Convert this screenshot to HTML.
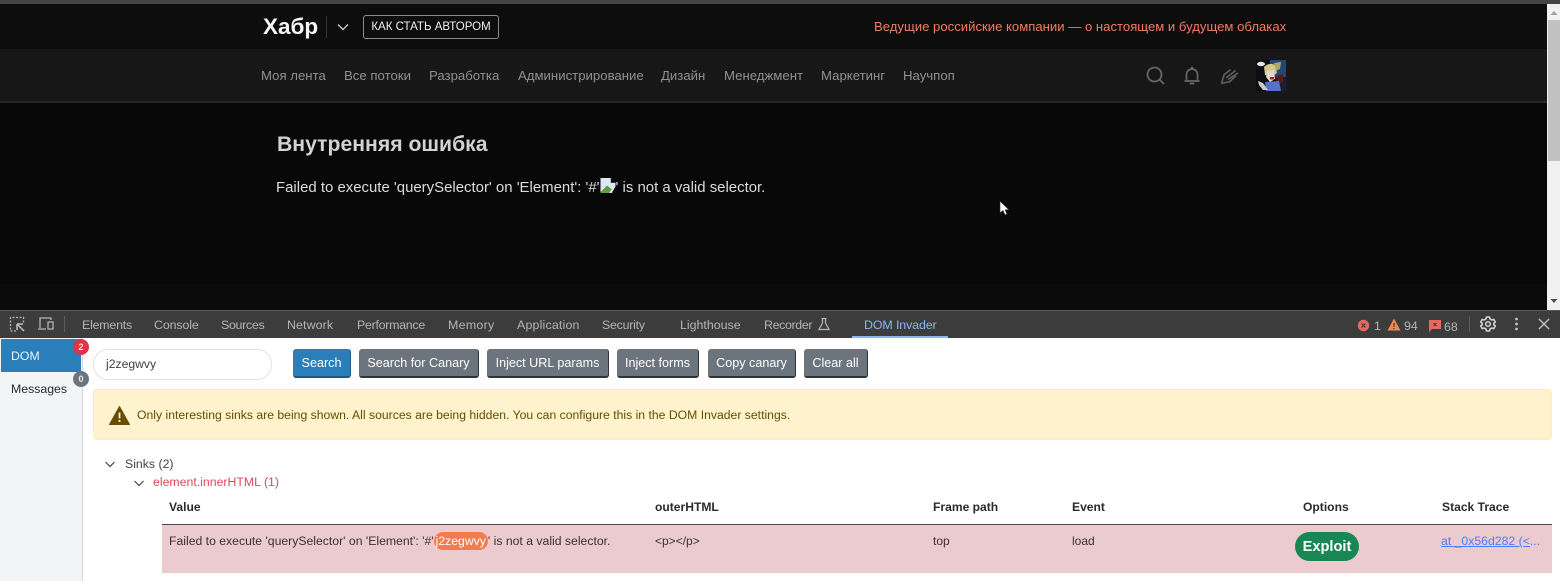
<!DOCTYPE html>
<html lang="ru"><head><meta charset="utf-8"><title>Хабр</title>
<style>
*{box-sizing:border-box}
html,body{margin:0;padding:0;width:1560px;height:581px;overflow:hidden;background:#fff;font-family:"Liberation Sans",sans-serif}
#w{position:absolute;left:0;top:0;width:1560px;height:581px;overflow:hidden;filter:blur(.3px)}
.a{position:absolute;white-space:nowrap}
.n{top:68px;font-size:13.2px;color:#8e9195;line-height:16px}
.t{top:318px;font-size:12.4px;color:#b4b4b4;line-height:14px}
.b{top:349px;height:29px;background:#6c757d;color:#fff;font-size:12.6px;line-height:28px;text-align:center;border-radius:3px;border-right:1px solid #2f3438;border-bottom:2px solid #2f3438}
.h{top:500px;font-size:12.1px;font-weight:bold;color:#2b2b2b;line-height:14px}
.c{top:534px;font-size:12px;color:#3a3034;line-height:14px}
</style></head><body><div id="w">
<div class="a" style="left:0;top:0;width:1560px;height:4px;background:#444"></div>
<div class="a" style="left:0;top:4px;width:1547px;height:45px;background:#0d0d0d"></div>
<div class="a" style="left:0;top:49px;width:1547px;height:52px;background:#171717"></div>
<div class="a" style="left:0;top:101px;width:1547px;height:2px;background:#262626"></div>
<div class="a" style="left:0;top:103px;width:1547px;height:181px;background:#080808"></div>
<div class="a" style="left:0;top:284px;width:1547px;height:26px;background:#0b0b0b"></div>

<div class="a" style="left:263px;top:14px;font-size:22.500px;font-weight:bold;color:#f5f5f5;line-height:25px">Хабр</div>
<div class="a" style="left:326px;top:16px;width:1px;height:22px;background:#333"></div>
<svg class="a" style="left:336px;top:22px" width="14" height="10" viewBox="0 0 14 10"><path d="M2 2.500 7 7.500 12 2.500" fill="none" stroke="#c9c9c9" stroke-width="1.400"/></svg>
<div class="a" style="left:363px;top:15px;width:136px;height:24px;border:1px solid #8a8a8a;border-radius:3px;color:#f0f0f0;font-size:11.500px;line-height:22px;text-align:center">КАК СТАТЬ АВТОРОМ</div>
<div class="a" style="left:874px;top:19px;font-size:13.130px;color:#f47a64;line-height:16px">Ведущие российские компании — о настоящем и будущем облаках</div>

<div class="a n" style="left:261px">Моя лента</div>
<div class="a n" style="left:344px">Все потоки</div>
<div class="a n" style="left:429px">Разработка</div>
<div class="a n" style="left:518px">Администрирование</div>
<div class="a n" style="left:661px">Дизайн</div>
<div class="a n" style="left:724px">Менеджмент</div>
<div class="a n" style="left:821px">Маркетинг</div>
<div class="a n" style="left:903px">Научпоп</div>

<svg class="a" style="left:1145px;top:65px" width="22" height="22" viewBox="0 0 22 22"><circle cx="9.500" cy="9.500" r="7" fill="none" stroke="#666" stroke-width="1.800"/><path d="M14.700 14.700 19 19" stroke="#666" stroke-width="1.800"/></svg>
<svg class="a" style="left:1183px;top:65px" width="18" height="21" viewBox="0 0 18 21"><path d="M1.500 16H16.500M3.500 16V9.500A5.500 5.500 0 0 1 14.500 9.500V16" fill="none" stroke="#666" stroke-width="1.700"/><circle cx="9" cy="3" r="1.300" fill="#666"/><path d="M6.800 18.500H11.200" stroke="#666" stroke-width="2"/></svg>
<svg class="a" style="left:1220px;top:66px" width="20" height="19" viewBox="0 0 20 19"><path d="M1.500 17.500 4 9 10.500 3.500M1.500 17.500 10 15.500 16 9.500M6 12 15.500 4.500M8 13.500 18 7" fill="none" stroke="#5f5f5f" stroke-width="1.600"/></svg>

<svg class="a" style="left:1256px;top:60px" width="30" height="31" viewBox="0 0 30 31">
<rect width="30" height="31" rx="2" fill="#0d0d14"/>
<rect x="14" y="0" width="16" height="17" fill="#23457c"/>
<rect x="20" y="17" width="10" height="14" fill="#1a1d38"/>
<path d="M19 17 27 14 27 22 21 24Z" fill="#5c171a"/>
<path d="M9 22 23 21 25 31 10 31Z" fill="#5672c6"/>
<path d="M8 7Q13 2 19 5L21 13 18 15 16 10 13 15 9 15Z" fill="#d4c88a"/>
<path d="M18 3 25 2 24 9 20 11Z" fill="#b3a568"/>
<path d="M11 11 18 10 19 19 14 22 10 17Z" fill="#e2d6d2"/>
<path d="M14 17h4v2.500h-4z" fill="#a62428"/>
<ellipse cx="5" cy="4" rx="4" ry="2.200" fill="#e6e6e6"/>
<path d="M2 21 7 23 12 30 7 30 3 25Z" fill="#cfc9c4"/>
</svg>

<div class="a" style="left:277px;top:132px;font-size:21.200px;font-weight:bold;color:#d2d2d2;line-height:26px">Внутренняя ошибка</div>
<div class="a" style="left:276px;top:179px;font-size:14.950px;color:#dcdcdc;line-height:18px">Failed to execute 'querySelector' on 'Element': '#'<span style="display:inline-block;width:16px"></span>' is not a valid selector.</div>
<svg class="a" style="left:600px;top:178px" width="16" height="15" viewBox="0 0 16 16"><path d="M0 0H11L16 5V16H0Z" fill="#dfe6f3"/><path d="M0 15 7 8 12 12 9 16H0Z" fill="#5d9e3f"/><path d="M11 0V5H16Z" fill="#050505"/><path d="M12 16 16 9V16Z" fill="#111"/></svg>
<svg class="a" style="left:999px;top:200px" width="11" height="16" viewBox="0 0 11 16"><path d="M1 1V13L4 10.500 6 15 8 14.200 6.200 9.800H10Z" fill="#fff" stroke="#222" stroke-width=".6"/></svg>

<div class="a" style="left:1547px;top:4px;width:13px;height:306px;background:#f1f1f1"></div>
<div class="a" style="left:1548px;top:20px;width:12px;height:141px;background:#c1c1c1"></div>
<svg class="a" style="left:1548px;top:9px" width="12" height="8" viewBox="0 0 12 8"><path d="M2.500 6 6 2 9.500 6Z" fill="#a3a3a3"/></svg>
<svg class="a" style="left:1548px;top:297px" width="12" height="8" viewBox="0 0 12 8"><path d="M2.500 2 6 6 9.500 2Z" fill="#505050"/></svg>

<div class="a" style="left:0;top:310px;width:1560px;height:28px;background:#3c3c3c;border-top:1px solid #5a5a5a"></div>
<svg class="a" style="left:8px;top:315px" width="18" height="18" viewBox="0 0 18 18"><path d="M8 16H2.500V2.500H15.500V8" fill="none" stroke="#b5b5b5" stroke-width="1.300" stroke-dasharray="2 1.500"/><path d="M9 9H15M9 9V15M9 9 16 16" fill="none" stroke="#c0c0c0" stroke-width="1.500"/></svg>
<svg class="a" style="left:37px;top:316px" width="18" height="15" viewBox="0 0 18 15"><path d="M1 13H9M3 12V2H14V4M11 6H16V13H11Z" fill="none" stroke="#b5b5b5" stroke-width="1.300"/></svg>
<div class="a" style="left:64px;top:316px;width:1px;height:16px;background:#5c5c5c"></div>
<div class="a t" style="left:82px;letter-spacing:-.2px">Elements</div>
<div class="a t" style="left:154px;letter-spacing:-.12px">Console</div>
<div class="a t" style="left:221px;letter-spacing:-.3px">Sources</div>
<div class="a t" style="left:287px;letter-spacing:.1px">Network</div>
<div class="a t" style="left:357px;letter-spacing:-.27px">Performance</div>
<div class="a t" style="left:448px;letter-spacing:.3px">Memory</div>
<div class="a t" style="left:517px;letter-spacing:.18px">Application</div>
<div class="a t" style="left:602px;letter-spacing:-.25px">Security</div>
<div class="a t" style="left:680px">Lighthouse</div>
<div class="a t" style="left:764px;letter-spacing:-.35px">Recorder</div>
<svg class="a" style="left:817px;top:317px" width="14" height="14" viewBox="0 0 14 14"><path d="M4.500 1.500H9.500M5.500 1.500V6L2 12.500H12L8.500 6V1.500" fill="none" stroke="#b5b5b5" stroke-width="1.200"/></svg>
<div class="a t" style="left:864px;color:#8ab4f8;letter-spacing:-.1px">DOM Invader</div>
<div class="a" style="left:852px;top:336px;width:96px;height:2px;background:#8ab4f8"></div>

<svg class="a" style="left:1357px;top:319px" width="13" height="13" viewBox="0 0 13 13"><circle cx="6.500" cy="6.500" r="5.700" fill="#e46962"/><path d="M4.500 4.500 8.500 8.500M8.500 4.500 4.500 8.500" stroke="#3c3c3c" stroke-width="1.200"/></svg>
<div class="a t" style="left:1374px;top:319px">1</div>
<svg class="a" style="left:1387px;top:318px" width="14" height="13" viewBox="0 0 14 13"><path d="M7 .5 13.500 12.500H.5Z" fill="#ee8a4e"/><path d="M7 5V9M7 10V11.300" stroke="#3c3c3c" stroke-width="1.200"/></svg>
<div class="a t" style="left:1404px;top:319px">94</div>
<svg class="a" style="left:1429px;top:320px" width="12" height="12" viewBox="0 0 12 12"><path d="M0 0H12V9H3L0 12Z" fill="#e46962"/><path d="M4.500 3 7.500 6M7.500 3 4.500 6" stroke="#3c3c3c" stroke-width="1"/></svg>
<div class="a t" style="left:1444px;top:320px">68</div>
<div class="a" style="left:1469px;top:316px;width:1px;height:16px;background:#5c5c5c"></div>
<svg class="a" style="left:1480px;top:316px" width="16" height="16" viewBox="0 0 16 16"><path d="M6.500 1H9.500L10 3 11.800 4 13.800 3.400 15.300 6 13.800 7.300V8.700L15.300 10 13.800 12.600 11.800 12 10 13 9.500 15H6.500L6 13 4.200 12 2.200 12.600.7 10 2.200 8.700V7.300L.7 6 2.200 3.400 4.200 4 6 3Z" fill="none" stroke="#cfcfcf" stroke-width="1.600"/><circle cx="8" cy="8" r="2.300" fill="none" stroke="#cfcfcf" stroke-width="1.500"/></svg>
<svg class="a" style="left:1514px;top:317px" width="5" height="14" viewBox="0 0 5 14"><circle cx="2.500" cy="2" r="1.400" fill="#c4c4c4"/><circle cx="2.500" cy="7" r="1.400" fill="#c4c4c4"/><circle cx="2.500" cy="12" r="1.400" fill="#c4c4c4"/></svg>
<svg class="a" style="left:1538px;top:318px" width="12" height="12" viewBox="0 0 12 12"><path d="M1 1 11 11M11 1 1 11" stroke="#c4c4c4" stroke-width="1.300"/></svg>

<div class="a" style="left:0;top:338px;width:83px;height:243px;background:#f2f4f6;border-right:1px solid #d5d7da"></div>
<div class="a" style="left:1px;top:339px;width:80px;height:33px;background:#2a7fba;color:#e8f3fa;font-size:12.300px;line-height:34px;padding-left:10px">DOM</div>
<div class="a" style="left:11px;top:382px;font-size:12.300px;color:#2b2b2b;line-height:14px">Messages</div>
<div class="a" style="left:73px;top:339px;width:16px;height:16px;border-radius:50%;background:#dc3545;color:#f5dfe1;font-size:9px;font-weight:bold;line-height:16px;text-align:center">2</div>
<div class="a" style="left:73px;top:371px;width:16px;height:16px;border-radius:50%;background:#6c757d;color:#e8e8e8;font-size:9px;font-weight:bold;line-height:16px;text-align:center">0</div>

<div class="a" style="left:93px;top:349px;width:179px;height:31px;border:1px solid #dee2e6;border-radius:15px;background:#fff;color:#3f3f3f;font-size:12.200px;line-height:29px;padding-left:12px">j2zegwvy</div>
<div class="a b" style="left:293px;width:58px;background:#2a7fba;border-color:#1c5a85">Search</div>
<div class="a b" style="left:359px;width:120px">Search for Canary</div>
<div class="a b" style="left:487px;width:122px">Inject URL params</div>
<div class="a b" style="left:617px;width:82px">Inject forms</div>
<div class="a b" style="left:708px;width:88px">Copy canary</div>
<div class="a b" style="left:804px;width:64px">Clear all</div>

<div class="a" style="left:93px;top:389px;width:1459px;height:51px;background:#fff3cd;border:1px solid #ffecb5;border-radius:4px"></div>
<svg class="a" style="left:109px;top:406px" width="21" height="19" viewBox="0 0 21 19"><path d="M10.500.5 20.500 18.500H.5Z" fill="#664d03" stroke="#664d03" stroke-linejoin="round"/><path d="M10.500 6.500V12.500M10.500 14V16" stroke="#fff3cd" stroke-width="1.800"/></svg>
<div class="a" style="left:137px;top:407px;font-size:12.210px;color:#664d03;line-height:16px">Only interesting sinks are being shown. All sources are being hidden. You can configure this in the DOM Invader settings.</div>

<svg class="a" style="left:104px;top:460px" width="12" height="9" viewBox="0 0 12 9"><path d="M1.500 2 6 6.500 10.500 2" fill="none" stroke="#444" stroke-width="1.200"/></svg>
<div class="a" style="left:125px;top:457px;font-size:12.300px;color:#444;line-height:14px">Sinks (2)</div>
<svg class="a" style="left:133px;top:479px" width="12" height="9" viewBox="0 0 12 9"><path d="M1.500 2 6 6.500 10.500 2" fill="none" stroke="#444" stroke-width="1.200"/></svg>
<div class="a" style="left:153px;top:475px;font-size:12.300px;color:#dc4a5a;line-height:14px">element.innerHTML (1)</div>

<div class="a h" style="left:169px">Value</div>
<div class="a h" style="left:655px">outerHTML</div>
<div class="a h" style="left:933px">Frame path</div>
<div class="a h" style="left:1072px">Event</div>
<div class="a h" style="left:1303px">Options</div>
<div class="a h" style="left:1442px">Stack Trace</div>
<div class="a" style="left:162px;top:524px;width:1390px;height:49px;background:#eccbcf;border-top:1px solid #4a4a4a"></div>
<div class="a c" style="left:169px;font-size:12.230px">Failed to execute 'querySelector' on 'Element': '#'<span style="display:inline-block;background:#f47b50;color:#fff;border-radius:9px;padding:2px 2px;margin:-2px 0;">j2zegwvy</span>' is not a valid selector.</div>
<div class="a c" style="left:655px">&lt;p&gt;&lt;/p&gt;</div>
<div class="a c" style="left:933px">top</div>
<div class="a c" style="left:1072px">load</div>
<div class="a" style="left:1295px;top:532px;width:64px;height:29px;border-radius:15px;background:#198754;color:#fff;font-size:14.600px;font-weight:bold;line-height:30px;text-align:center">Exploit</div>
<div class="a c" style="left:1441px;color:#4a7dff;font-size:12.250px"><span style="text-decoration:underline">at _0x56d282 (&lt;</span>...</div>
</div></body></html>
